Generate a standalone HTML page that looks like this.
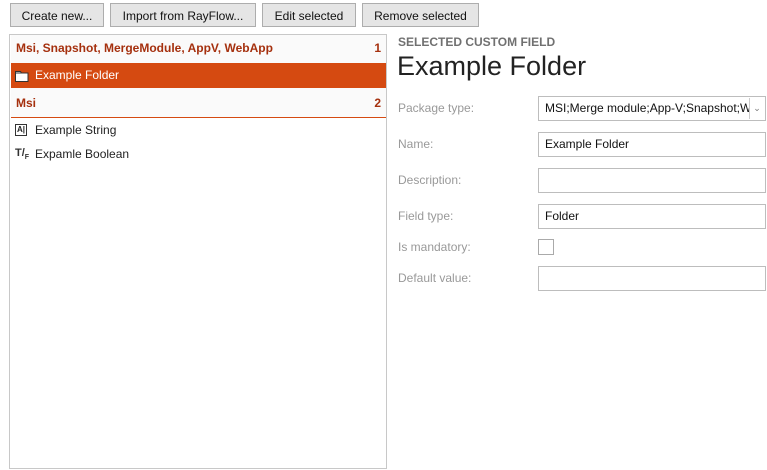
<!DOCTYPE html>
<html><head><style>
body{margin:0;width:767px;height:470px;background:#fff;font-family:"Segoe UI","Liberation Sans",sans-serif;font-size:12px;color:#222;position:relative;overflow:hidden}
.a{position:absolute}
.btn{position:absolute;top:3px;height:24px;border:1px solid #adadad;background:#e5e5e5;text-align:center;line-height:24px;font-size:12px;color:#111;box-sizing:border-box}
.panel{left:9px;top:34px;width:378px;height:435px;border:1px solid #c8c8c8;box-sizing:border-box}
.hdr{position:absolute;left:1px;width:375px;background:#fafafa;color:#a5300e;font-weight:bold;font-size:12px}
.lbl{position:absolute;left:398px;color:#999;font-size:12px}
.inp{position:absolute;left:538px;width:228px;height:25px;border:1px solid #bdbdbd;box-sizing:border-box;padding-left:6px;line-height:23px;font-size:12px;color:#111;white-space:nowrap;overflow:hidden}
</style></head><body>
<div class="btn" style="left:10px;width:94px">Create new...</div>
<div class="btn" style="left:110px;width:146px">Import from RayFlow...</div>
<div class="btn" style="left:262px;width:94px">Edit selected</div>
<div class="btn" style="left:362px;width:117px">Remove selected</div>

<div class="a panel">
 <div class="hdr" style="top:0;height:28px;line-height:27px"><span style="position:absolute;left:5px">Msi, Snapshot, MergeModule, AppV, WebApp</span><span style="position:absolute;right:5px">1</span></div>
 <div class="a" style="left:1px;top:28px;width:375px;height:25px;background:#d54a11;color:#fff;line-height:25px">
  <svg class="a" style="left:4px;top:6px" width="14" height="13" viewBox="0 0 14 13"><path d="M0.5 2.5h5l1 1.5h6.5v8.5h-12.5z" fill="#fff" stroke="#333" stroke-width="1"/><path d="M0.5 4h13" stroke="#333"/></svg>
  <span style="position:absolute;left:24px">Example Folder</span></div>
 <div class="hdr" style="top:53px;height:29px;line-height:30px;border-bottom:1px solid #d54a11"><span style="position:absolute;left:5px">Msi</span><span style="position:absolute;right:5px">2</span></div>
 <div class="a" style="left:5px;top:89px;width:12px;height:12px;border:1px solid #333;box-sizing:border-box;font-size:8px;line-height:10px;text-align:center;font-weight:bold">A|</div>
 <div class="a" style="left:25px;top:88px">Example String</div>
 <div class="a" style="left:5px;top:112px;font-size:11px;font-weight:bold;color:#333">T/<sub style="font-size:7px">F</sub></div>
 <div class="a" style="left:25px;top:112px">Expamle Boolean</div>
</div>

<div class="a" style="left:398px;top:35px;font-weight:bold;color:#707070;font-size:12px">SELECTED CUSTOM FIELD</div>
<div class="a" style="left:397px;top:51px;font-size:27px;color:#222;font-weight:300">Example Folder</div>

<div class="lbl" style="top:101px">Package type:</div>
<div class="inp" style="top:96px;padding-right:18px"><span style="display:inline-block;width:204px;overflow:hidden;vertical-align:top">MSI;Merge module;App-V;Snapshot;W</span><span style="position:absolute;right:1px;top:1px;width:14px;height:21px;border-left:1px solid #ccc;color:#777;text-align:center;line-height:20px;font-size:9px;background:#fff">&#8964;</span></div>
<div class="lbl" style="top:137px">Name:</div>
<div class="inp" style="top:132px">Example Folder</div>
<div class="lbl" style="top:173px">Description:</div>
<div class="inp" style="top:168px"></div>
<div class="lbl" style="top:209px">Field type:</div>
<div class="inp" style="top:204px">Folder</div>
<div class="lbl" style="top:240px">Is mandatory:</div>
<div class="a" style="left:538px;top:239px;width:16px;height:16px;border:1px solid #aaa;box-sizing:border-box"></div>
<div class="lbl" style="top:271px">Default value:</div>
<div class="inp" style="top:266px"></div>
</body></html>
